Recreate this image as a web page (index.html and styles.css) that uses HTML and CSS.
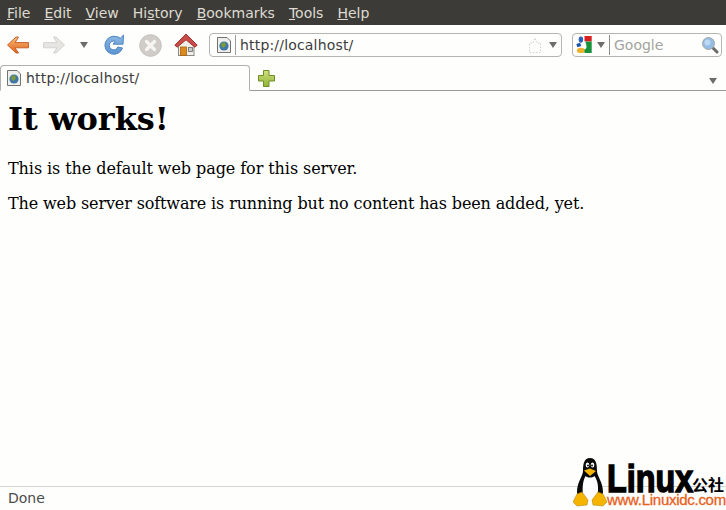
FILE: index.html
```html
<!DOCTYPE html>
<html lang="en">
<head>
<meta charset="utf-8">
<title>http://localhost/</title>
<link rel="stylesheet" href="styles.css">
</head>
<body>
<div class="browser">
  <nav class="menubar">
    <span class="menu"><u>F</u>ile</span>
    <span class="menu"><u>E</u>dit</span>
    <span class="menu"><u>V</u>iew</span>
    <span class="menu">Hi<u>s</u>tory</span>
    <span class="menu"><u>B</u>ookmarks</span>
    <span class="menu"><u>T</u>ools</span>
    <span class="menu"><u>H</u>elp</span>
  </nav>
  <div class="toolbar">
    <svg class="ic back" width="24" height="20" viewBox="0 0 24 20">
      <defs><linearGradient id="og" x1="0" y1="0" x2="0" y2="1"><stop offset="0" stop-color="#f8c078"/><stop offset="1" stop-color="#e0601c"/></linearGradient></defs>
      <path d="M10 2 L1.500 10 L10 18 L12.500 18 L9 12.800 L22.500 12.800 L22.500 7.600 L9 7.600 L12.500 2 Z" fill="url(#og)" stroke="#c8622a" stroke-width="1" stroke-linejoin="round"/>
    </svg>
    <svg class="ic fwd" width="24" height="20" viewBox="0 0 24 20">
      <path d="M14 2 L22.500 10 L14 18 L11.500 18 L15 12.800 L1.500 12.800 L1.500 7.600 L15 7.600 L11.500 2 Z" fill="#e6e5e1" stroke="#d4d3cf" stroke-width="1" stroke-linejoin="round"/>
    </svg>
    <span class="drop hist"></span>
    <svg class="ic reload" width="22" height="23" viewBox="0 0 22 23">
      <defs><linearGradient id="bg" x1="0" y1="0" x2="0" y2="1"><stop offset="0" stop-color="#8db8e4"/><stop offset="1" stop-color="#5a94d2"/></linearGradient></defs>
      <path d="M13.500 2.600 A9 9 0 1 0 19.500 14 L14.800 13 A4.400 4.400 0 1 1 12.200 7.300 L10 10.200 L20 10.200 L20.500 1 L17.300 4.200 A9 9 0 0 0 13.500 2.600 Z" fill="url(#bg)" stroke="#4f86c2" stroke-width="1" stroke-linejoin="round"/>
    </svg>
    <svg class="ic stop" width="23" height="23" viewBox="0 0 23 23">
      <circle cx="11.500" cy="11.500" r="10.800" fill="#d0cdc9" stroke="#c4c1bd"/>
      <path d="M7.500 7.500 L15.500 15.500 M15.500 7.500 L7.500 15.500" stroke="#f6f5f3" stroke-width="3.200" stroke-linecap="round"/>
    </svg>
    <svg class="ic home" width="24" height="24" viewBox="0 0 24 24">
      <rect x="4.500" y="10" width="15.500" height="12.500" fill="#f0efe9" stroke="#8a8a84"/>
      <path d="M12 6.500 L20 13.500 L4 13.500 Z" fill="#f0efe9"/>
      <path d="M.8 12.200 L12 1 L23.200 12.200 L20.800 14.200 L12 6.800 L3.200 14.200 Z" fill="#c64c4a" stroke="#a23432" stroke-width="1" stroke-linejoin="round"/>
      <rect x="6.500" y="14" width="6" height="8.500" fill="#dc8a20" stroke="#a8620e" stroke-width=".8"/>
      <rect x="14.500" y="14.500" width="4" height="4" fill="#c4ccd2" stroke="#6a6a66" stroke-width=".8"/>
    </svg>
    <div class="urlbar">
      <span class="fav-wrap">
        <svg width="14" height="16" viewBox="0 0 14 16">
          <path d="M.5 .5 H10 L13.500 4 V15.500 H.5 Z" fill="#eeeeec" stroke="#74746f"/>
          <circle cx="7" cy="9" r="4.600" fill="#3f77a6"/>
          <path d="M4 6.500 L8 5 L9 8.500 L6.500 11 L4.500 9.500 Z" fill="#7a9a3c"/>
        </svg>
      </span>
      <span class="url-text">http://localhost/</span>
      <svg class="star" width="12" height="15" viewBox="0 0 12 15">
        <path d="M6 .5 L8 5 H11.500 V14.500 H.5 V5 H4 Z" fill="none" stroke="#cfcfcb" stroke-dasharray="1.500 1.500"/>
      </svg>
      <span class="drop url-drop"></span>
    </div>
    <div class="searchbar">
      <svg class="g-logo" width="17" height="18" viewBox="0 0 18 20">
        <ellipse cx="5" cy="4" rx="2.500" ry="3.500" fill="#2a62b8"/>
        <path d="M0 9 L4 7.500 L5.500 11 L1 12.500 Z" fill="#1c54a8"/>
        <ellipse cx="5" cy="16" rx="4.500" ry="3" fill="#ecb22e"/>
        <rect x="9" y="0" width="8" height="6" fill="#d81e1e"/>
        <path d="M10 6 H17 V19 H9 V15 Q12 14 11 10 Z" fill="#18923a"/>
      </svg>
      <span class="drop g-drop"></span>
      <span class="search-text">Google</span>
      <svg class="mag" width="18" height="18" viewBox="0 0 18 18">
        <path d="M11 11 L16 16" stroke="#6a6a66" stroke-width="3" stroke-linecap="round"/>
        <circle cx="7.500" cy="7.500" r="6" fill="#94bde6" stroke="#a8a8a4"/>
        <circle cx="6.500" cy="6.500" r="3" fill="#bcd8f2"/>
      </svg>
    </div>
  </div>
  <div class="tabstrip">
    <div class="tab">
      <svg width="14" height="16" viewBox="0 0 14 16">
        <path d="M.5 .5 H10 L13.500 4 V15.500 H.5 Z" fill="#eeeeec" stroke="#74746f"/>
        <circle cx="7" cy="9" r="4.600" fill="#3f77a6"/>
        <path d="M4 6.500 L8 5 L9 8.500 L6.500 11 L4.500 9.500 Z" fill="#7a9a3c"/>
      </svg>
      <span class="tab-title">http://localhost/</span>
    </div>
    <svg class="newtab" width="17" height="17" viewBox="0 0 17 17">
      <defs><linearGradient id="gg" x1="0" y1="0" x2="0" y2="1"><stop offset="0" stop-color="#cfe07c"/><stop offset="1" stop-color="#8fb336"/></linearGradient></defs>
      <path d="M5.500 .5 H11 V5.500 H16.500 V11 H11 V16.500 H5.500 V11 H.5 V5.500 H5.500 Z" fill="url(#gg)" stroke="#6e8f24" stroke-linejoin="round"/>
    </svg>
    <span class="drop tab-drop"></span>
  </div>
  <main class="content">
    <h1>It works!</h1>
    <p class="line-one">This is the default web page for this server.</p>
    <p class="line-two">The web server software is running but no content has been added, yet.</p>
  </main>
  <footer class="status">Done</footer>
</div>
<div class="watermark">
  <svg class="tux" width="34" height="50" viewBox="0 0 34 50">
    <path d="M17 0 C11 0 10 6 10 13 C10 18 4 24 4 34 C4 38 6 41 9 43 H25 C28 41 30 38 30 34 C30 24 24 18 24 13 C24 6 23 0 17 0 Z" fill="#0a0a0a"/>
    <path d="M12.500 18 C9 24 9 34 11 43 H23 C26 34 26 24 21.500 18 C19 20 15 20 12.500 18 Z" fill="#fff"/>
    <ellipse cx="14.500" cy="7" rx="1.800" ry="2.600" fill="#fff"/>
    <ellipse cx="19.500" cy="7" rx="1.800" ry="2.600" fill="#fff"/>
    <circle cx="15" cy="7.500" r=".9" fill="#000"/>
    <circle cx="19" cy="7.500" r=".9" fill="#000"/>
    <path d="M11 12.500 L17 10.500 L23 13 L17 18 Z" fill="#f4b400"/>
    <path d="M0 44 L4 36 L9 34 L15 42 L14 47 L4 48 Z" fill="#f4b400" stroke="#a87c00" stroke-width=".5"/>
    <path d="M34 44 L30 36 L25 34 L19 42 L20 47 L30 48 Z" fill="#f4b400" stroke="#a87c00" stroke-width=".5"/>
  </svg>
  <div class="wm-text">
    <div class="wm-top"><span class="wm-linux">Linux</span><span class="wm-cn">公社</span></div>
    <div class="wm-url">www.Linuxidc.com</div>
  </div>
</div>
</body>
</html>
```

FILE: styles.css
```css
* { box-sizing: border-box; }
html, body { margin: 0; height: 510px; overflow: hidden; }
body { position: relative; font-family: "DejaVu Sans", sans-serif; background: #fefefc; }
.browser { display: flex; flex-direction: column; height: 510px; }
.menubar { height: 25px; background: #3c3b37; color: #dfdbd2; display: flex; align-items: center; padding-left: 7px; font-size: 14px; flex: none; }
.menu { margin-right: 14px; }
.toolbar { height: 40px; background: #fefefc; display: flex; align-items: center; padding-left: 6px; flex: none; }
.ic { flex: none; }
.fwd { margin-left: 12px; }
.hist { margin-left: 14px; }
.reload { margin-left: 15px; }
.stop { margin-left: 14px; }
.home { margin-left: 12px; }
.drop { width: 0; height: 0; border-left: 4.500px solid transparent; border-right: 4.500px solid transparent; border-top: 6px solid #6c6c68; flex: none; }
.urlbar { margin-left: 11px; width: 353px; height: 24px; border: 1px solid #b4b4b0; border-radius: 4px; display: flex; align-items: center; padding-left: 7px; background: #fefefc; flex: none; }
.fav-wrap { display: flex; border-right: 1px solid #9c9c98; padding-right: 4px; height: 20px; align-items: center; }
.url-text { margin-left: 4px; font-size: 14px; letter-spacing: .18px; color: #3c3c3c; flex: 1; }
.star { margin-right: 8px; }
.url-drop { margin-right: 4px; }
.searchbar { margin-left: 10px; width: 150px; height: 24px; border: 1px solid #b4b4b0; border-radius: 4px; display: flex; align-items: center; padding-left: 3px; flex: none; }
.g-drop { margin-left: 4px; }
.search-text { margin-left: 4px; border-left: 1px solid #8c8c88; padding-left: 4px; height: 20px; line-height: 20px; font-size: 14px; color: #a4a4a0; flex: 1; }
.mag { margin-right: 2px; }
.tabstrip { height: 26px; display: flex; align-items: flex-end; border-bottom: 1px solid #9a9a96; flex: none; }
.tab { width: 250px; height: 26px; margin-bottom: -1px; border: 1px solid #b0b0ac; border-bottom: 1px solid #fefefc; border-radius: 4px 4px 0 0; display: flex; align-items: center; padding-left: 6px; background: #fefefc; }
.tab-title { margin-left: 5px; font-size: 14px; letter-spacing: .18px; color: #3c3c3c; }
.newtab { margin: 0 0 3px 8px; }
.tab-drop { margin: 0 9px 6px auto; }
.content { flex: 1; padding: 0 8px; color: #000; font-family: "DejaVu Serif", serif; font-size: 16px; }
h1 { margin: 10px 0 0; font-size: 32px; line-height: 37px; font-weight: 700; }
p { margin: 0; line-height: 19px; }
.line-one { margin-top: 21px; letter-spacing: -.07px; }
.line-two { margin-top: 16px; letter-spacing: -.13px; }
.status { height: 24px; border-top: 1px solid #d4d4d0; font-size: 14px; color: #4c4c4c; padding: 3px 0 0 8px; flex: none; }
.watermark { position: absolute; left: 573px; top: 458px; width: 153px; height: 52px; display: flex; }
.tux { flex: none; }
.wm-text { flex: none; }
.wm-top { display: flex; height: 28px; margin-top: 7px; color: #000; white-space: nowrap; }
.wm-linux { display: inline-block; width: 85px; font: 700 38px/28px "Liberation Sans", sans-serif; -webkit-text-stroke: 1.500px #000; transform: scaleX(.85); transform-origin: 0 50%; }
.wm-cn { font: 700 16px/16px "Noto Sans CJK SC", sans-serif; margin-top: 11px; }
.wm-url { font: 400 15px/13px "Liberation Sans", sans-serif; color: #e8601c; letter-spacing: -.28px; -webkit-text-stroke: .3px #e8601c; white-space: nowrap; }
```
